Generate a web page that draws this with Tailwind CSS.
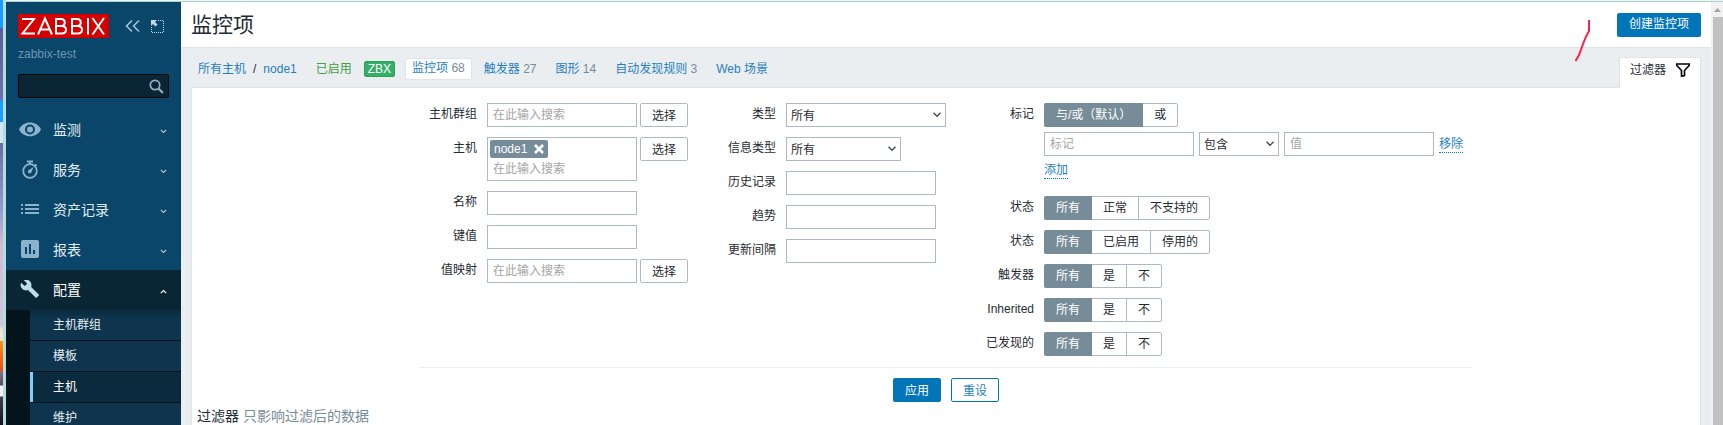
<!DOCTYPE html>
<html lang="zh-CN">
<head>
<meta charset="utf-8">
<title>监控项</title>
<script src="https://cdn.jsdelivr.net/npm/@tailwindcss/browser@4"></script>
</head>
<body class="h-screen overflow-hidden flex bg-[#ebeef0] font-['Liberation_Sans','Noto_Sans_CJK_SC',sans-serif] text-xs text-[#1f2c33]">
<div class="w-[3px] shrink-0 bg-[linear-gradient(#189cff_0_28px,#5c5ca0_28px,#7070ae_100px,#16a0ff_101px_122px,#d4e6fa_122px_143px,#6f6aa8_143px,#9a98cc_210px,#d8b8d8_245px,#d0c4dc_325px,#f6e3cd_330px_341px,#ff9410_341px,#f04a10_371px,#8b7385_371px,#5c4a68_385px,#f4f4f6_386px_396px,#4a3c54_397px,#15121c_425px)]"></div>
<div class="w-[3px] shrink-0 bg-[#b0dfdd]"></div>
<div class="flex flex-col flex-1 min-w-0">
<div class="h-[2px] shrink-0 bg-[#e6f8f7] border-b border-[#b4cfd0]"></div>
<div class="flex flex-1 min-h-0">

<aside class="w-[175px] shrink-0 overflow-hidden bg-[#0a466a]">
  <div class="flex items-center pt-3 pl-3 h-9">
    <a href="#" aria-label="ZABBIX" class="block">
      <svg width="91" height="24" viewBox="0 0 91 24"><rect width="91" height="24" fill="#d40000"/><g fill="none" stroke="#fff" stroke-width="2"><path d="M4 5H16L4.500 19.500H17"/><path d="M20 20.500L27 4.500L34 20.500M22.500 15.500H31.500"/><path d="M38 5V19.500H43.500C49.500 19.500 49.500 12 43.500 12H38H43C48 12 48 5 43 5Z"/><path d="M54 5V19.500H59.500C65.500 19.500 65.500 12 59.500 12H54H59C64 12 64 5 59 5Z"/><path d="M70 4V20.500M74.500 4L86 20.500M86 4L74.500 20.500"/></g></svg>
    </a>
    <button aria-label="折叠" class="ml-4"><svg width="16" height="14" viewBox="0 0 16 14" fill="none" stroke="#a9c9de" stroke-width="1.500"><path d="M7 1.500L1.500 7L7 12.500M14 1.500L8.500 7L14 12.500"/></svg></button>
    <button aria-label="隐藏" class="ml-[10px]"><svg width="13" height="13" viewBox="0 0 13 13"><path d="M7 .5H12.500V12.500H.5V7" fill="none" stroke="#c5dae8" stroke-dasharray="1 1"/><path d="M0 0H6L4 2L6.500 4.500L4.500 6.500L2 4L0 6Z" fill="#c5dae8"/></svg></button>
  </div>
  <div class="pl-3 mt-2 h-4 leading-4 text-[#6d97b0]">zabbix-test</div>
  <div class="mx-3 mt-3 h-6 flex items-center bg-[#0a2635] border border-[#01070b] rounded-xs pr-1">
    <input aria-label="搜索" class="flex-1 min-w-0 bg-transparent outline-none px-1 text-white">
    <button aria-label="搜索"><svg width="15" height="15" viewBox="0 0 15 15" fill="none" stroke="#92afc0"><circle cx="6" cy="6" r="4.700" stroke-width="1.700"/><path d="M9.500 9.500L14 14" stroke-width="2.200"/></svg></button>
  </div>
  <nav class="mt-3 text-sm text-[#e3edf4]">
    <a href="#" class="flex items-center h-10 px-3"><svg class="w-6 shrink-0" height="20" viewBox="0 0 24 20"><path d="M1 9.500C5 .3 19 .3 23 9.500C19 18.500 5 18.500 1 9.500Z" fill="#8db3cc"/><circle cx="12" cy="9.500" r="4" fill="none" stroke="#0a466a" stroke-width="2"/></svg><span class="ml-[11px] flex-1">监测</span><svg class="mr-[2px] mt-[2px]" width="7" height="5" viewBox="0 0 7 5" fill="none" stroke="#b5cfe0" stroke-width="1.100"><path d="M.8 .8L3.500 3.500L6.200 .8"/></svg></a>
    <a href="#" class="flex items-center h-10 px-3"><svg class="w-6 shrink-0" height="20" viewBox="0 0 24 20"><g fill="none" stroke="#8db3cc" stroke-width="1.800"><circle cx="12" cy="11" r="6.800"/><path d="M9 1.500H15M12 1.500V4.500M17 4.500L18.500 6"/></g><path d="M15.500 7L13.500 12A1.800 1.800 0 1 1 11 10Z" fill="#8db3cc"/></svg><span class="ml-[11px] flex-1">服务</span><svg class="mr-[2px] mt-[2px]" width="7" height="5" viewBox="0 0 7 5" fill="none" stroke="#b5cfe0" stroke-width="1.100"><path d="M.8 .8L3.500 3.500L6.200 .8"/></svg></a>
    <a href="#" class="flex items-center h-10 px-3"><svg class="w-6 shrink-0" height="20" viewBox="0 0 24 20" fill="#8db3cc"><path d="M3 4h2v2H3zM3 8h2v2H3zM3 12h2v2H3zM7 4h14v2H7zM7 8h14v2H7zM7 12h14v2H7z"/></svg><span class="ml-[11px] flex-1">资产记录</span><svg class="mr-[2px] mt-[2px]" width="7" height="5" viewBox="0 0 7 5" fill="none" stroke="#b5cfe0" stroke-width="1.100"><path d="M.8 .8L3.500 3.500L6.200 .8"/></svg></a>
    <a href="#" class="flex items-center h-10 px-3"><svg class="w-6 shrink-0" height="20" viewBox="0 0 24 20"><rect x="3" y="0" width="18" height="18" rx="2" fill="#8db3cc"/><path d="M7 7h2v7H7zM11 4h2v10h-2zM15 10h2v4h-2z" fill="#0a466a"/></svg><span class="ml-[11px] flex-1">报表</span><svg class="mr-[2px] mt-[2px]" width="7" height="5" viewBox="0 0 7 5" fill="none" stroke="#b5cfe0" stroke-width="1.100"><path d="M.8 .8L3.500 3.500L6.200 .8"/></svg></a>
    <a href="#" class="flex items-center h-10 px-3 bg-[#0a2635] text-white"><svg class="w-6 shrink-0" height="20" viewBox="0 0 24 20"><path d="M20.700 16.700L12.500 8.500C13.300 6.400 12.800 4 11.100 2.300C9.300 .5 6.600 .2 4.500 1.200L8.300 5L5.600 7.600L1.800 3.900C.7 6 1.100 8.800 2.900 10.600C4.600 12.300 7 12.700 9.100 11.900L17.300 20C17.600 20.300 18.100 20.300 18.500 20L20.600 17.900C21 17.600 21 17 20.700 16.700Z" transform="translate(1.500 -1) scale(.93)" fill="#c3dcec"/></svg><span class="ml-[11px] flex-1">配置</span><svg class="mr-[2px] mt-[2px]" width="7" height="5" viewBox="0 0 7 5" fill="none" stroke="#fff" stroke-width="1.100"><path d="M.8 4.200L3.500 1.500L6.200 4.200"/></svg></a>
    <div class="bg-[#03141d] pl-6 flex flex-col gap-px text-xs">
      <a href="#" class="h-[30px] leading-[30px] pl-[23px] bg-[linear-gradient(#0a2a3e,#0f344d_8px)]">主机群组</a>
      <a href="#" class="h-[30px] leading-[30px] pl-[23px] bg-[#0f344d]">模板</a>
      <a href="#" class="h-[30px] leading-[30px] pl-5 bg-[#0a2b3e] border-l-3 border-[#7dcbff] text-white">主机</a>
      <a href="#" class="h-[30px] leading-[30px] pl-[23px] bg-[#0f344d]">维护</a>
    </div>
  </nav>
</aside>

<main class="relative flex-1 min-w-0 flex flex-col">
  <header class="h-[46px] shrink-0 bg-white border-b border-[#dfe4e7] flex items-center justify-between pl-[10px] pr-[10px]">
    <h1 class="text-[21px] leading-7">监控项</h1>
    <button class="h-6 px-3 rounded-xs bg-[#0275b8] text-white pb-px">创建监控项</button>
  </header>
  <div class="flex items-end h-[39px] shrink-0 pl-[17px] pr-[10px]">
    <nav class="flex items-center flex-1 h-[39px] text-[#1f7fc0] pt-[2px]">
      <a href="#">所有主机</a><span class="mx-[7px] text-[#1f2c33]">/</span><a href="#">node1</a>
      <span class="ml-[19px] text-[#429e47]">已启用</span>
      <span class="ml-3 h-4 leading-[14px] px-[3px] rounded-xs border border-[#2f9f5e] bg-[#34af67] text-white">ZBX</span>
      <a href="#" class="ml-[10px] h-[22px] leading-[19px] px-[6px] bg-white border border-[#dfe4e7] rounded-xs">监控项 <span class="text-[#768d99]">68</span></a>
      <a href="#" class="ml-3">触发器 <span class="text-[#768d99]">27</span></a>
      <a href="#" class="ml-[19px]">图形 <span class="text-[#768d99]">14</span></a>
      <a href="#" class="ml-[19px]">自动发现规则 <span class="text-[#768d99]">3</span></a>
      <a href="#" class="ml-[19px]">Web 场景</a>
    </nav>
    <button class="relative z-10 -mb-px h-[31px] px-[10px] pb-[6px] flex items-center gap-[10px] bg-white border border-b-0 border-[#dfe4e7]">过滤器<svg width="14" height="14" viewBox="0 0 14 14" fill="none" stroke="#000" stroke-width="1.600"><path d="M.8 1H13.200V2.500L8.500 7.500V12.500L5.500 13.200V7.500L.8 2.500Z"/></svg></button>
  </div>

  <section class="flex-1 ml-[10px] mr-[10px] bg-white border border-b-0 border-[#dfe4e7] pt-[15px] min-h-0">
    <form class="w-fit mx-auto">
      <div class="flex gap-10 px-[10px] items-start">
        <div class="grid grid-cols-[auto_auto] gap-x-[10px] gap-y-[10px] items-start">
          <label for="hg" class="leading-[23px] text-right">主机群组</label>
          <div class="flex gap-[3px]"><input id="hg" placeholder="在此输入搜索" class="w-[150px] h-6 border border-[#acbbc2] px-[5px] pb-px outline-none placeholder:text-[#a5a5a5]"><button type="button" class="h-6 px-[11px] border border-[#acbbc2] rounded-xs pt-[2px]">选择</button></div>
          <label for="host" class="leading-[23px] text-right">主机</label>
          <div class="flex gap-[3px] items-start">
            <div class="w-[150px] border border-[#acbbc2] h-11 p-[2px]">
              <div class="w-fit h-[18px] flex items-center gap-[7px] bg-[#768d99] text-white rounded-xs pl-1 pr-1">node1<button type="button" aria-label="移除 node1"><svg width="10" height="10" viewBox="0 0 10 10" stroke="#fff" stroke-width="2.600"><path d="M1 1L9 9M9 1L1 9"/></svg></button></div>
              <input id="host" placeholder="在此输入搜索" class="block w-full h-[21px] px-[3px] pt-px outline-none placeholder:text-[#a5a5a5]">
            </div>
            <button type="button" class="h-6 px-[11px] border border-[#acbbc2] rounded-xs pt-[2px]">选择</button></div>
          <label for="name" class="leading-[23px] text-right">名称</label>
          <input id="name" class="w-[150px] h-6 border border-[#acbbc2] px-[5px]">
          <label for="key" class="leading-[23px] text-right">键值</label>
          <input id="key" class="w-[150px] h-6 border border-[#acbbc2] px-[5px]">
          <label for="vm" class="leading-[23px] text-right">值映射</label>
          <div class="flex gap-[3px]"><input id="vm" placeholder="在此输入搜索" class="w-[150px] h-6 border border-[#acbbc2] px-[5px] pb-px outline-none placeholder:text-[#a5a5a5]"><button type="button" class="h-6 px-[11px] border border-[#acbbc2] rounded-xs pt-[2px]">选择</button></div>
        </div>

        <div class="grid grid-cols-[auto_auto] gap-x-[10px] gap-y-[10px] items-start">
          <label for="type" class="leading-[23px] text-right">类型</label>
          <div class="relative w-[160px]"><select id="type" class="appearance-none block w-full h-6 border border-[#acbbc2] bg-white pl-1 pt-[2px]"><option>所有</option></select><svg class="absolute right-[5px] top-[9px] pointer-events-none" width="8" height="6" viewBox="0 0 8 6" fill="none" stroke="#3c474d" stroke-width="1.300"><path d="M.5 .8L4 4.300L7.500 .8"/></svg></div>
          <label for="info" class="leading-[23px] text-right">信息类型</label>
          <div class="relative w-[115px]"><select id="info" class="appearance-none block w-full h-6 border border-[#acbbc2] bg-white pl-1 pt-[2px]"><option>所有</option></select><svg class="absolute right-[5px] top-[9px] pointer-events-none" width="8" height="6" viewBox="0 0 8 6" fill="none" stroke="#3c474d" stroke-width="1.300"><path d="M.5 .8L4 4.300L7.500 .8"/></svg></div>
          <label for="hist" class="leading-[23px] text-right">历史记录</label>
          <input id="hist" class="w-[150px] h-6 border border-[#acbbc2] px-[5px]">
          <label for="trend" class="leading-[23px] text-right">趋势</label>
          <input id="trend" class="w-[150px] h-6 border border-[#acbbc2] px-[5px]">
          <label for="delay" class="leading-[23px] text-right">更新间隔</label>
          <input id="delay" class="w-[150px] h-6 border border-[#acbbc2] px-[5px]">
        </div>

        <div class="grid grid-cols-[auto_auto] gap-x-[10px] gap-y-[10px] items-start">
          <span id="l1" class="leading-[23px] text-right">标记</span>
          <div class="h-[83px]">
            <div role="radiogroup" aria-labelledby="l1" class="flex w-fit h-6 leading-[22px] border border-[#acbbc2] rounded-xs">
              <label class="px-3 -m-px py-px bg-[#768d99] text-white rounded-l-xs"><input type="radio" name="r1" checked class="sr-only">与/或（默认）</label>
              <label class="px-[11px] pl-3"><input type="radio" name="r1" class="sr-only">或</label>
            </div>
            <div class="flex gap-[5px] mt-[5px] items-start">
              <input aria-label="标记" placeholder="标记" class="w-[150px] h-6 border border-[#acbbc2] px-[5px] pb-px placeholder:text-[#a5a5a5]">
              <div class="relative w-20"><select aria-label="运算符" class="appearance-none block w-full h-6 border border-[#acbbc2] bg-white pl-1 pt-[2px]"><option>包含</option></select><svg class="absolute right-[5px] top-[9px] pointer-events-none" width="8" height="6" viewBox="0 0 8 6" fill="none" stroke="#3c474d" stroke-width="1.300"><path d="M.5 .8L4 4.300L7.500 .8"/></svg></div>
              <input aria-label="值" placeholder="值" class="w-[150px] h-6 border border-[#acbbc2] px-[5px] pb-px placeholder:text-[#a5a5a5]">
              <button type="button" class="mt-1 h-[17px] leading-4 border-b border-dotted border-[#0275b8] text-[#1f7fc0]">移除</button>
            </div>
            <button type="button" class="block mt-[6px] h-[17px] leading-4 border-b border-dotted border-[#0275b8] text-[#1f7fc0]">添加</button>
          </div>
          <span id="l2" class="leading-[23px] text-right">状态</span>
          <div role="radiogroup" aria-labelledby="l2" class="flex w-fit h-6 leading-[22px] border border-[#acbbc2] rounded-xs">
            <label class="px-3 -m-px py-px bg-[#768d99] text-white rounded-l-xs"><input type="radio" name="r2" checked class="sr-only">所有</label>
            <label class="px-[11px] pl-3"><input type="radio" name="r2" class="sr-only">正常</label>
            <label class="px-[11px] border-l border-[#acbbc2]"><input type="radio" name="r2" class="sr-only">不支持的</label>
          </div>
          <span id="l3" class="leading-[23px] text-right">状态</span>
          <div role="radiogroup" aria-labelledby="l3" class="flex w-fit h-6 leading-[22px] border border-[#acbbc2] rounded-xs">
            <label class="px-3 -m-px py-px bg-[#768d99] text-white rounded-l-xs"><input type="radio" name="r3" checked class="sr-only">所有</label>
            <label class="px-[11px] pl-3"><input type="radio" name="r3" class="sr-only">已启用</label>
            <label class="px-[11px] border-l border-[#acbbc2]"><input type="radio" name="r3" class="sr-only">停用的</label>
          </div>
          <span id="l4" class="leading-[23px] text-right">触发器</span>
          <div role="radiogroup" aria-labelledby="l4" class="flex w-fit h-6 leading-[22px] border border-[#acbbc2] rounded-xs">
            <label class="px-3 -m-px py-px bg-[#768d99] text-white rounded-l-xs"><input type="radio" name="r4" checked class="sr-only">所有</label>
            <label class="px-[11px] pl-3"><input type="radio" name="r4" class="sr-only">是</label>
            <label class="px-[11px] border-l border-[#acbbc2]"><input type="radio" name="r4" class="sr-only">不</label>
          </div>
          <span id="l5" class="leading-[23px] text-right">Inherited</span>
          <div role="radiogroup" aria-labelledby="l5" class="flex w-fit h-6 leading-[22px] border border-[#acbbc2] rounded-xs">
            <label class="px-3 -m-px py-px bg-[#768d99] text-white rounded-l-xs"><input type="radio" name="r5" checked class="sr-only">所有</label>
            <label class="px-[11px] pl-3"><input type="radio" name="r5" class="sr-only">是</label>
            <label class="px-[11px] border-l border-[#acbbc2]"><input type="radio" name="r5" class="sr-only">不</label>
          </div>
          <span id="l6" class="leading-[23px] text-right">已发现的</span>
          <div role="radiogroup" aria-labelledby="l6" class="flex w-fit h-6 leading-[22px] border border-[#acbbc2] rounded-xs">
            <label class="px-3 -m-px py-px bg-[#768d99] text-white rounded-l-xs"><input type="radio" name="r6" checked class="sr-only">所有</label>
            <label class="px-[11px] pl-3"><input type="radio" name="r6" class="sr-only">是</label>
            <label class="px-[11px] border-l border-[#acbbc2]"><input type="radio" name="r6" class="sr-only">不</label>
          </div>
        </div>
      </div>
      <div class="mt-[11px] pt-[10px] border-t border-[#ebeef0] flex justify-center gap-[10px]">
        <button type="button" class="h-6 px-[11px] border border-[#0275b8] bg-[#0275b8] text-white rounded-xs pt-[2px]">应用</button>
        <button type="button" class="h-6 px-[11px] border border-[#0275b8] bg-white text-[#1f7fc0] rounded-xs pt-[2px]">重设</button>
      </div>
    </form>
    <p class="mt-1 pl-[5px] text-sm leading-5">过滤器 <span class="text-[#768d99]">只影响过滤后的数据</span></p>
  </section>
  <svg class="absolute right-[120px] top-[17px]" width="17" height="44" viewBox="0 0 17 44" fill="none" stroke="#ff1f4f" stroke-width="2"><path d="M15 1V12C10 20 8 29 5 36L1.500 42"/></svg>
</main>
<div class="w-3 shrink-0 bg-[#f1f1f1] flex flex-col items-end">
  <svg class="shrink-0" width="11" height="15" viewBox="0 0 11 15"><path d="M2 10L5.500 6L9 10Z" fill="#a3a3a3"/></svg>
  <div class="w-[10px] flex-1 bg-[#c1c1c1]"></div>
</div>
</div>
</div>
</body>
</html>
